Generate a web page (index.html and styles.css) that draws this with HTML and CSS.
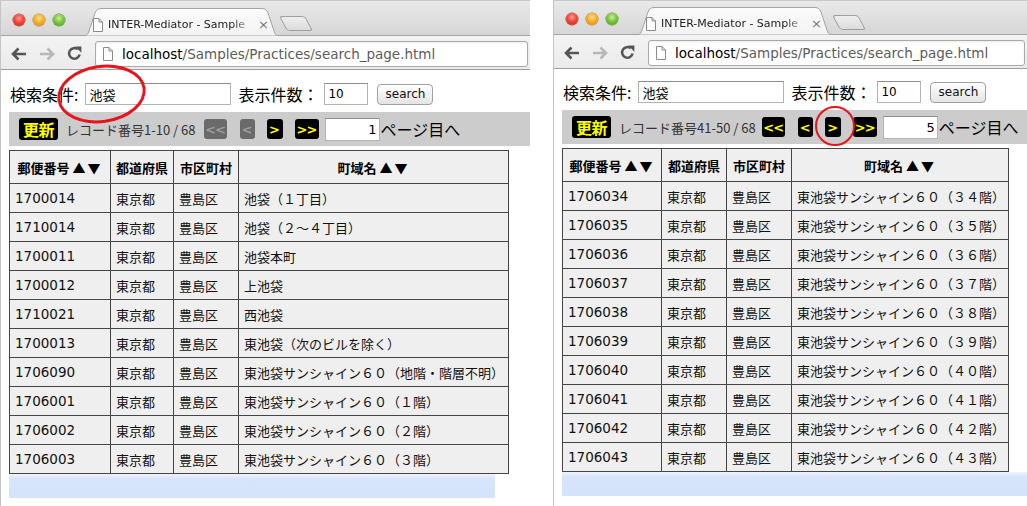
FILE: index.html
```html
<!DOCTYPE html>
<html lang="ja">
<head>
<meta charset="utf-8">
<title>INTER-Mediator - Sample</title>
<link rel="stylesheet" href="styles.css">
</head>
<body>
<div class="screen">
  <section class="win win-a">
    <div class="tabstrip">
      <div class="lights"><span class="light red"></span><span class="light yellow"></span><span class="light green"></span></div>
      <div class="tab">
        <svg class="tab-shape" viewBox="0 0 197 28" preserveAspectRatio="none"><defs><linearGradient id="tg1" x1="0" y1="0" x2="0" y2="1"><stop offset="0" stop-color="#fbfbfb"/><stop offset="1" stop-color="#f3f3f3"/></linearGradient></defs><path d="M0 28 C4 28 5 26 6 23 L12 5 C13 2 15 0.5 18 0.5 L179 0.5 C182 0.5 184 2 185 5 L191 23 C192 26 193 28 197 28 Z" fill="url(#tg1)" stroke="#a4a4a4" stroke-width="1"/></svg>
        <svg class="favicon" viewBox="0 0 10 14"><path d="M0.5 0.5 H6 L9.5 4 V13.5 H0.5 Z M6 0.5 V4 H9.5" fill="#fff" stroke="#8a8a8a" stroke-width="1"/></svg>
        <span class="tab-title">INTER-Mediator - Sample</span>
        <span class="tab-close">×</span>
      </div>
      <div class="newtab"></div>
    </div>
    <div class="toolbar">
      <svg class="ico ico-back" viewBox="0 0 16 14"><path d="M7.5 1.5 L2 7 L7.5 12.5 M2.5 7 H15" fill="none" stroke="#555" stroke-width="2.6"/></svg>
      <svg class="ico ico-fwd" viewBox="0 0 16 14"><path d="M8.5 1.5 L14 7 L8.5 12.5 M13.5 7 H1" fill="none" stroke="#b8b8b8" stroke-width="2.6"/></svg>
      <svg class="ico ico-reload" viewBox="0 0 15 15"><path d="M12.6 8.5 A5.3 5.3 0 1 1 10.8 3.3" fill="none" stroke="#555" stroke-width="2.5"/><path d="M8.2 0.6 L14.4 0.6 L14.4 6.8 Z" fill="#555"/></svg>
      <div class="omnibox">
        <svg class="pageicon" viewBox="0 0 10 14"><path d="M0.5 0.5 H6 L9.5 4 V13.5 H0.5 Z M6 0.5 V4 H9.5" fill="#fff" stroke="#8a8a8a" stroke-width="1"/></svg>
        <span class="host">localhost</span><span class="path">/Samples/Practices/search_page.html</span>
      </div>
    </div>
    <div class="page">
      <div class="search-row">
        <span class="lbl">検索条件:</span>
        <input class="field field-cond" type="text" value="池袋">
        <span class="lbl lbl-count">表示件数：</span>
        <input class="field field-count" type="text" value="10">
        <button class="btn-search" type="button">search</button>
      </div>
      <div class="navbar">
        <span class="nbtn nbtn-update">更新</span>
        <span class="reclabel">レコード番号1-10 / 68</span>
        <span class="nbtn nb-first off">&lt;&lt;</span>
        <span class="nbtn nb-prev off">&lt;</span>
        <span class="nbtn nb-next">&gt;</span>
        <span class="nbtn nb-last">&gt;&gt;</span>
        <input class="field field-page" type="text" value="1">
        <span class="pagelabel">ページ目へ</span>
      </div>
      <table class="grid grid-a">
        <thead>
          <tr><th class="c1">郵便番号 <span class="sort">▲▼</span></th><th class="c2">都道府県</th><th class="c3">市区町村</th><th class="c4">町域名 <span class="sort">▲▼</span></th></tr>
        </thead>
        <tbody>
          <tr><td class="num">1700014</td><td>東京都</td><td>豊島区</td><td>池袋（１丁目）</td></tr>
          <tr><td class="num">1710014</td><td>東京都</td><td>豊島区</td><td>池袋（２〜４丁目）</td></tr>
          <tr><td class="num">1700011</td><td>東京都</td><td>豊島区</td><td>池袋本町</td></tr>
          <tr><td class="num">1700012</td><td>東京都</td><td>豊島区</td><td>上池袋</td></tr>
          <tr><td class="num">1710021</td><td>東京都</td><td>豊島区</td><td>西池袋</td></tr>
          <tr><td class="num">1700013</td><td>東京都</td><td>豊島区</td><td>東池袋（次のビルを除く）</td></tr>
          <tr><td class="num">1706090</td><td>東京都</td><td>豊島区</td><td>東池袋サンシャイン６０（地階・階層不明）</td></tr>
          <tr><td class="num">1706001</td><td>東京都</td><td>豊島区</td><td>東池袋サンシャイン６０（１階）</td></tr>
          <tr><td class="num">1706002</td><td>東京都</td><td>豊島区</td><td>東池袋サンシャイン６０（２階）</td></tr>
          <tr><td class="num">1706003</td><td>東京都</td><td>豊島区</td><td>東池袋サンシャイン６０（３階）</td></tr>
        </tbody>
      </table>
      <div class="bluebar bluebar-a"></div>
    </div>
  </section>

  <div class="gap"></div>

  <section class="win win-b">
    <div class="tabstrip">
      <div class="lights"><span class="light red"></span><span class="light yellow"></span><span class="light green"></span></div>
      <div class="tab">
        <svg class="tab-shape" viewBox="0 0 197 28" preserveAspectRatio="none"><defs><linearGradient id="tg2" x1="0" y1="0" x2="0" y2="1"><stop offset="0" stop-color="#fbfbfb"/><stop offset="1" stop-color="#f3f3f3"/></linearGradient></defs><path d="M0 28 C4 28 5 26 6 23 L12 5 C13 2 15 0.5 18 0.5 L179 0.5 C182 0.5 184 2 185 5 L191 23 C192 26 193 28 197 28 Z" fill="url(#tg2)" stroke="#a4a4a4" stroke-width="1"/></svg>
        <svg class="favicon" viewBox="0 0 10 14"><path d="M0.5 0.5 H6 L9.5 4 V13.5 H0.5 Z M6 0.5 V4 H9.5" fill="#fff" stroke="#8a8a8a" stroke-width="1"/></svg>
        <span class="tab-title">INTER-Mediator - Sample</span>
        <span class="tab-close">×</span>
      </div>
      <div class="newtab"></div>
    </div>
    <div class="toolbar">
      <svg class="ico ico-back" viewBox="0 0 16 14"><path d="M7.5 1.5 L2 7 L7.5 12.5 M2.5 7 H15" fill="none" stroke="#555" stroke-width="2.6"/></svg>
      <svg class="ico ico-fwd" viewBox="0 0 16 14"><path d="M8.5 1.5 L14 7 L8.5 12.5 M13.5 7 H1" fill="none" stroke="#b8b8b8" stroke-width="2.6"/></svg>
      <svg class="ico ico-reload" viewBox="0 0 15 15"><path d="M12.6 8.5 A5.3 5.3 0 1 1 10.8 3.3" fill="none" stroke="#555" stroke-width="2.5"/><path d="M8.2 0.6 L14.4 0.6 L14.4 6.8 Z" fill="#555"/></svg>
      <div class="omnibox">
        <svg class="pageicon" viewBox="0 0 10 14"><path d="M0.5 0.5 H6 L9.5 4 V13.5 H0.5 Z M6 0.5 V4 H9.5" fill="#fff" stroke="#8a8a8a" stroke-width="1"/></svg>
        <span class="host">localhost</span><span class="path">/Samples/Practices/search_page.html</span>
      </div>
    </div>
    <div class="page">
      <div class="search-row">
        <span class="lbl">検索条件:</span>
        <input class="field field-cond" type="text" value="池袋">
        <span class="lbl lbl-count">表示件数：</span>
        <input class="field field-count" type="text" value="10">
        <button class="btn-search" type="button">search</button>
      </div>
      <div class="navbar">
        <span class="nbtn nbtn-update">更新</span>
        <span class="reclabel">レコード番号41-50 / 68</span>
        <span class="nbtn nb-first">&lt;&lt;</span>
        <span class="nbtn nb-prev">&lt;</span>
        <span class="nbtn nb-next">&gt;</span>
        <span class="nbtn nb-last">&gt;&gt;</span>
        <input class="field field-page" type="text" value="5">
        <span class="pagelabel">ページ目へ</span>
      </div>
      <table class="grid grid-b">
        <thead>
          <tr><th class="c1">郵便番号 <span class="sort">▲▼</span></th><th class="c2">都道府県</th><th class="c3">市区町村</th><th class="c4">町域名 <span class="sort">▲▼</span></th></tr>
        </thead>
        <tbody>
          <tr><td class="num">1706034</td><td>東京都</td><td>豊島区</td><td>東池袋サンシャイン６０（３４階）</td></tr>
          <tr><td class="num">1706035</td><td>東京都</td><td>豊島区</td><td>東池袋サンシャイン６０（３５階）</td></tr>
          <tr><td class="num">1706036</td><td>東京都</td><td>豊島区</td><td>東池袋サンシャイン６０（３６階）</td></tr>
          <tr><td class="num">1706037</td><td>東京都</td><td>豊島区</td><td>東池袋サンシャイン６０（３７階）</td></tr>
          <tr><td class="num">1706038</td><td>東京都</td><td>豊島区</td><td>東池袋サンシャイン６０（３８階）</td></tr>
          <tr><td class="num">1706039</td><td>東京都</td><td>豊島区</td><td>東池袋サンシャイン６０（３９階）</td></tr>
          <tr><td class="num">1706040</td><td>東京都</td><td>豊島区</td><td>東池袋サンシャイン６０（４０階）</td></tr>
          <tr><td class="num">1706041</td><td>東京都</td><td>豊島区</td><td>東池袋サンシャイン６０（４１階）</td></tr>
          <tr><td class="num">1706042</td><td>東京都</td><td>豊島区</td><td>東池袋サンシャイン６０（４２階）</td></tr>
          <tr><td class="num">1706043</td><td>東京都</td><td>豊島区</td><td>東池袋サンシャイン６０（４３階）</td></tr>
        </tbody>
      </table>
      <div class="bluebar bluebar-b"></div>
    </div>
  </section>

  <div class="mark mark-a"></div>
  <div class="mark mark-b"></div>
</div>
</body>
</html>
```

FILE: styles.css
```css
* { box-sizing: border-box; }

html, body {
  margin: 0;
  padding: 0;
  background: #fff;
  overflow: hidden;
}

body {
  font-family: "DejaVu Sans", "Noto Sans CJK JP", sans-serif;
  color: #000;
}

.screen {
  position: relative;
  width: 1027px;
  height: 506px;
  display: flex;
  align-items: stretch;
  background: #fff;
}

.win {
  display: flex;
  flex-direction: column;
  border-left: 1px solid #c4c4c4;
  overflow: hidden;
}

.win-a { width: 530px; flex: none; }
.gap { width: 23px; flex: none; }
.win-b { flex: 1; min-width: 0; }

/* ---------- tab strip ---------- */
.tabstrip {
  height: 36px;
  flex: none;
  display: flex;
  align-items: flex-end;
  background: linear-gradient(#e9e9e9, #d6d6d6);
  border-bottom: 1px solid #a4a4a4;
  border-top: 1px solid #c8c8c8;
}

.win-b .tabstrip { height: 35px; }

.lights {
  display: flex;
  gap: 8px;
  margin-left: 12px;
  align-self: flex-start;
  margin-top: 13px;
}

.win-b .lights { margin-top: 12px; }

.light {
  width: 12px;
  height: 12px;
  border-radius: 50%;
  display: block;
}

.light.red {
  background: radial-gradient(circle at 50% 35%, #ff9a8f 0, #f2473c 45%, #c0231b 100%);
  box-shadow: 0 0 0 0.5px #a8352c;
}

.light.yellow {
  background: radial-gradient(circle at 50% 35%, #ffe08a 0, #f6b02c 45%, #cf8612 100%);
  box-shadow: 0 0 0 0.5px #a87a22;
}

.light.green {
  background: radial-gradient(circle at 50% 35%, #c8f09a 0, #7dc63f 45%, #4d9a1e 100%);
  box-shadow: 0 0 0 0.5px #4e8a2c;
}

.tab {
  position: relative;
  z-index: 1;
  width: 197px;
  height: 28px;
  margin-left: 18px;
  margin-bottom: -1px;
  display: flex;
  align-items: center;
  padding: 5px 0 0 10px;
  flex: none;
}

.tab-shape {
  position: absolute;
  inset: 0;
  width: 100%;
  height: 100%;
  z-index: -1;
}

.favicon {
  width: 10px;
  height: 14px;
  flex: none;
}

.tab-title {
  margin-left: 5px;
  width: 146px;
  overflow: hidden;
  white-space: nowrap;
  font-size: 11px;
  color: #222;
  -webkit-mask-image: linear-gradient(to right, #000 85%, transparent 100%);
  mask-image: linear-gradient(to right, #000 85%, transparent 100%);
}

.tab-close {
  margin-left: 4px;
  font-size: 13px;
  color: #777;
}

.newtab {
  width: 26px;
  height: 15px;
  margin-left: 3px;
  margin-bottom: 4px;
  border: 1px solid #9e9e9e;
  border-radius: 3px;
  background: linear-gradient(#ededed, #dcdcdc);
  transform: skewX(28deg);
  flex: none;
}

/* ---------- toolbar ---------- */
.toolbar {
  height: 34px;
  flex: none;
  display: flex;
  align-items: center;
  padding-left: 10px;
  padding-top: 2px;
  background: linear-gradient(#f3f3f3, #ebebeb);
  border-bottom: 1px solid #9d9d9d;
}

.ico { flex: none; }
.ico-back { width: 16px; height: 14px; }
.ico-fwd { width: 16px; height: 14px; margin-left: 12px; }
.ico-reload { width: 15px; height: 15px; margin-left: 12px; }

.omnibox {
  flex: 1;
  min-width: 0;
  height: 26px;
  margin-left: 13px;
  margin-right: 2px;
  align-self: flex-end;
  margin-bottom: 2px;
  background: #fff;
  border: 1px solid #a9a9a9;
  border-radius: 3px;
  box-shadow: inset 0 1px 2px rgba(0,0,0,0.08);
  display: flex;
  align-items: center;
  padding-left: 7px;
  white-space: nowrap;
  overflow: hidden;
  font-size: 13.5px;
}

.pageicon {
  width: 10px;
  height: 14px;
  flex: none;
  margin-right: 9px;
}

.host { color: #000; }
.path { color: #5c5c5c; }

/* ---------- page ---------- */
.page {
  flex: 1;
  background: #fff;
  padding: 13px 0 0 8px;
  display: flex;
  flex-direction: column;
  align-items: flex-start;
}

.win-b .page { padding-top: 12px; }

.search-row {
  display: flex;
  align-items: center;
  height: 22px;
}

.lbl {
  font-family: "Noto Sans CJK JP", sans-serif;
  font-size: 16px;
  line-height: 22px;
  margin-left: 1px;
}

.field {
  font-family: "DejaVu Sans", "Noto Sans CJK JP", sans-serif;
  font-size: 12px;
  height: 22px;
  border: 1px solid #b4b4b4;
  border-top-color: #8e8e8e;
  background: #fff;
  padding: 0 3px;
  margin: 0;
  color: #000;
  outline: none;
}

.field-cond {
  width: 146px;
  margin-left: 7px;
  font-size: 13px;
}

.lbl-count { margin-left: 7px; }

.field-count {
  width: 44px;
  margin-left: 6px;
}

.btn-search {
  margin-left: 9px;
  width: 56px;
  height: 21px;
  padding: 0;
  font-family: "DejaVu Sans", sans-serif;
  font-size: 12px;
  color: #111;
  background: linear-gradient(#ffffff, #e4e4e4);
  border: 1px solid #a0a0a0;
  border-radius: 4px;
}

.navbar {
  margin-top: 7px;
  height: 34px;
  align-self: stretch;
  background: #cccccc;
  display: flex;
  align-items: center;
  padding-left: 10px;
  white-space: nowrap;
}

.nbtn {
  display: flex;
  align-items: center;
  justify-content: center;
  height: 20px;
  background: #000;
  color: #ffff00;
  border-radius: 3px;
  font-family: "DejaVu Sans", sans-serif;
  font-weight: bold;
  font-size: 13px;
  flex: none;
}

.nbtn.off {
  background: #6a6a6a;
  color: #9c9c9c;
}

.nbtn-update {
  width: 39px;
  height: 22px;
  font-family: "Noto Sans CJK JP", sans-serif;
  font-size: 16px;
  letter-spacing: -0.5px;
}

.reclabel {
  margin-left: 8px;
  font-family: "Noto Sans CJK JP", sans-serif;
  font-size: 13px;
  color: #333;
}

.nb-first { width: 23px; margin-left: 8px; letter-spacing: -1px; }
.nb-prev { width: 15px; margin-left: 13px; }
.nb-next { width: 16px; margin-left: 12px; }
.nb-last { width: 24px; margin-left: 12px; letter-spacing: -1px; }

.win-b .nb-first { margin-left: 6px; }

.field-page {
  width: 55px;
  height: 23px;
  margin-left: 6px;
  text-align: right;
  font-size: 13px;
  padding-right: 2px;
}

.pagelabel {
  margin-left: 1px;
  font-family: "Noto Sans CJK JP", sans-serif;
  font-size: 16px;
}

/* ---------- table ---------- */
.grid {
  margin-top: 4px;
  border-collapse: collapse;
  table-layout: fixed;
  border: 1px solid #454545;
}

.grid th, .grid td {
  border: 1px solid #454545;
  background: #efefef;
  padding: 0 0 0 5px;
  white-space: nowrap;
  overflow: hidden;
}

.grid th {
  height: 33px;
  text-align: center;
  font-family: "Noto Sans CJK JP", sans-serif;
  font-weight: bold;
  font-size: 13px;
  padding: 0;
}

.grid th .sort {
  letter-spacing: 2px;
}

.grid td {
  height: 29px;
  font-family: "Noto Sans CJK JP", sans-serif;
  font-size: 13px;
  color: #111;
}

.grid td.num {
  font-family: "DejaVu Sans", sans-serif;
  font-size: 13.5px;
}

.grid-a .c1 { width: 101px; }
.grid-a .c2 { width: 63px; }
.grid-a .c3 { width: 65px; }
.grid-a .c4 { width: 270px; }

.grid-b .c1 { width: 99px; }
.grid-b .c2 { width: 65px; }
.grid-b .c3 { width: 65px; }
.grid-b .c4 { width: 217px; }

.bluebar {
  height: 24px;
  background: linear-gradient(#eef3fd 0, #d7e4fa 5px, #d5e3fa 100%);
}

.bluebar-a { width: 486px; }
.bluebar-b { align-self: stretch; }

/* ---------- annotation marks ---------- */
.mark {
  position: absolute;
  border: 3px solid #e8141b;
  border-radius: 50%;
  pointer-events: none;
}

.mark-a {
  left: 57px;
  top: 65px;
  width: 89px;
  height: 58px;
  transform: rotate(-8deg);
}

.mark-b {
  left: 815px;
  top: 106px;
  width: 40px;
  height: 40px;
  border-width: 2.5px;
}
```
